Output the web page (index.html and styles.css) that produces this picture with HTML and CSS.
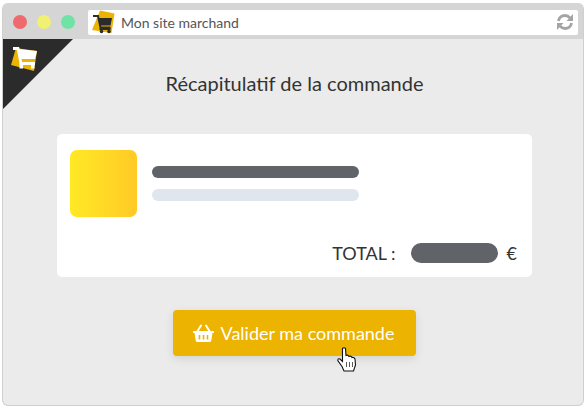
FILE: index.html
```html
<!DOCTYPE html>
<html lang="fr">
<head>
    <meta charset="UTF-8">
    <title>Mon site marchand</title>
    <link rel="stylesheet" href="styles.css">
</head>
<body>

    <div class="window">

        <!-- Browser bar -->
        <div class="browser-bar">
            <div class="dots">
                <span class="dot dot-red"></span>
                <span class="dot dot-yellow"></span>
                <span class="dot dot-green"></span>
            </div>
            <div class="address">
                <svg class="address-logo" width="24" height="24" viewBox="0 0 24 24">
                    <polygon points="9,0.500 23.500,3.500 20.500,23 1,20" fill="#ecb300"/>
                    <path d="M2 6H7L9.500 17.500H19.500" fill="none" stroke="#2b2b2b" stroke-width="2"/>
                    <polygon points="7.500,8 21,8 19.500,15.500 9,15.500" fill="#2b2b2b"/>
                    <rect x="8.500" y="18" width="11" height="2" fill="#2b2b2b"/>
                    <circle cx="10.500" cy="21.500" r="1.800" fill="#2b2b2b"/>
                    <circle cx="18" cy="21.500" r="1.800" fill="#2b2b2b"/>
                </svg>
                <span class="address-text">Mon site marchand</span>
                <svg class="reload" width="16" height="16" viewBox="0 0 16 16">
                    <path d="M1.500 7C2 3.500 4.800 1.500 8 1.500C10 1.500 11.800 2.400 12.900 3.800" fill="none" stroke="#a4a4a4" stroke-width="2.800"/>
                    <polygon points="16,0 16,7 9.500,7" fill="#a4a4a4"/>
                    <path d="M14.500 9C14 12.500 11.200 14.500 8 14.500C6 14.500 4.200 13.600 3.100 12.200" fill="none" stroke="#a4a4a4" stroke-width="2.800"/>
                    <polygon points="0,16 0,9 6.500,9" fill="#a4a4a4"/>
                </svg>
            </div>
        </div>

        <!-- Corner logo -->
        <div class="corner"></div>
        <svg class="corner-logo" width="27" height="27" viewBox="0 0 27 27">
            <polygon points="5,3 26,6 23,26 0,20" fill="#ecb300"/>
            <path d="M2 3.500H7L10 18.500H24" fill="none" stroke="#fff" stroke-width="2.800"/>
            <polygon points="7,4 26,6 24,14 9,14" fill="#fff"/>
            <rect x="8.500" y="18" width="3.500" height="5.500" fill="#fff"/>
            <rect x="20" y="18" width="3.500" height="5.500" fill="#fff"/>
        </svg>

        <!-- Content -->
        <div class="content">
            <h1 class="title">Récapitulatif de la commande</h1>

            <div class="card">
                <div class="product">
                    <div class="thumb"></div>
                    <div class="lines">
                        <div class="line line-dark"></div>
                        <div class="line line-light"></div>
                    </div>
                </div>
                <div class="total">
                    <span class="total-label">TOTAL :</span>
                    <span class="total-pill"></span>
                    <span>€</span>
                </div>
            </div>

            <div class="button-wrap">
                <button class="validate-btn">
                    <svg width="21" height="18" viewBox="0 0 21 18">
                        <path d="M0.800 7H20.200Q21 7 21 8V8.500Q21 9 20.200 9H0.800Q0 9 0 8.500V8Q0 7 0.800 7Z" fill="#fff"/>
                        <path d="M4 8L8 1.500M17 8L13 1.500" stroke="#fff" stroke-width="2" stroke-linecap="round"/>
                        <path d="M1.500 9H19.500L18.300 16.500Q18.100 18 16.800 18H4.200Q2.900 18 2.700 16.500Z" fill="#fff"/>
                        <path d="M6.500 11V15.500M10.500 11V15.500M14.500 11V15.500" stroke="#ecb300" stroke-width="1.600"/>
                    </svg>
                    <span>Valider ma commande</span>
                </button>
                <svg class="cursor" width="20" height="25" viewBox="0 0 20 25">
                    <path d="M5.500 1.500Q7 0 8.500 1.500L9 8.500Q11 7.500 12 9.500Q14 8.500 15 10.500Q17 10 18 12L18.500 18L16.500 24H7L5 19.500L0.800 13.500Q0.800 11 3 12L5.500 14.500Z" fill="#fff" stroke="#111" stroke-width="1.100"/>
                    <path d="M9.500 15V20M12.500 15V20M15.500 15V20" stroke="#111" stroke-width="0.700"/>
                </svg>
            </div>
        </div>
    </div>

</body>
</html>
```

FILE: styles.css
```css
html, body {
    margin: 0;
    padding: 0;
}

body {
    width: 588px;
    height: 410px;
    overflow: hidden;
    background-color: #fff;
    font-family: Lato, "Open Sans", sans-serif;
    color: #333;
}

.window {
    position: relative;
    box-sizing: border-box;
    width: 582px;
    height: 403px;
    margin: 3px 0 0 2px;
    background-color: #ebebeb;
    border: 1px solid #cfcfcf;
    border-top: none;
    border-radius: 6px;
    overflow: hidden;
}

/* Browser bar */
.browser-bar {
    display: flex;
    align-items: center;
    box-sizing: border-box;
    height: 36px;
    padding: 2px 5px 0 10px;
    background-color: #d5d5d5;
}

.dots {
    display: flex;
    gap: 10px;
    width: 75px;
}

.dot {
    width: 14px;
    height: 14px;
    border-radius: 50%;
}

.dot-red { background-color: #ee6a6e; }
.dot-yellow { background-color: #f0f073; }
.dot-green { background-color: #6fe3a5; }

.address {
    display: flex;
    align-items: center;
    flex: 1;
    height: 25px;
    padding: 0 5px 0 3px;
    background-color: #fff;
    border-radius: 2px;
}

.address-logo {
    margin-right: 6px;
}

.address-text {
    flex: 1;
    font-size: 14px;
    color: #555;
}

/* Corner */
.corner {
    position: absolute;
    top: 36px;
    left: 0;
    width: 70px;
    height: 70px;
    background-color: #2b2b2b;
    clip-path: polygon(0 0, 100% 0, 0 100%);
}

.corner-logo {
    position: absolute;
    top: 42px;
    left: 8px;
}

/* Content */
.content {
    padding: 0 51px 0 54px;
}

.title {
    margin: 32px 0 39px;
    font-size: 20px;
    line-height: 24px;
    font-weight: 400;
    text-align: center;
    color: #333;
}

.card {
    box-sizing: border-box;
    height: 143px;
    padding: 16px 15px 0 13px;
    background-color: #fff;
    border-radius: 5px;
}

.product {
    display: flex;
    align-items: flex-start;
    gap: 15px;
}

.thumb {
    width: 67px;
    height: 67px;
    border-radius: 7px;
    background: linear-gradient(to right, #ffe926, #ffca26);
}

.lines {
    display: flex;
    flex-direction: column;
    gap: 11px;
    width: 207px;
    padding-top: 16px;
}

.line {
    height: 12px;
    border-radius: 6px;
}

.line-dark { background-color: #606367; }
.line-light { background-color: #e0e6ee; }

.total {
    display: flex;
    align-items: center;
    justify-content: flex-end;
    margin-top: 26px;
    font-size: 18px;
    line-height: 20px;
}

.total-label {
    margin-right: 15px;
}

.total-pill {
    width: 87px;
    height: 20px;
    margin-right: 9px;
    border-radius: 10px;
    background-color: #606367;
}

/* Button */
.button-wrap {
    position: relative;
    display: flex;
    justify-content: center;
    margin-top: 33px;
}

.validate-btn {
    display: flex;
    align-items: center;
    justify-content: center;
    gap: 7px;
    width: 243px;
    height: 46px;
    padding: 0 2px 0 0;
    border: none;
    border-radius: 4px;
    background-color: #ecb300;
    box-shadow: 0 3px 10px rgba(0, 0, 0, 0.1);
    font-family: inherit;
    font-size: 18px;
    color: #fff;
}

.cursor {
    position: absolute;
    top: 37px;
    left: 280px;
}
```
